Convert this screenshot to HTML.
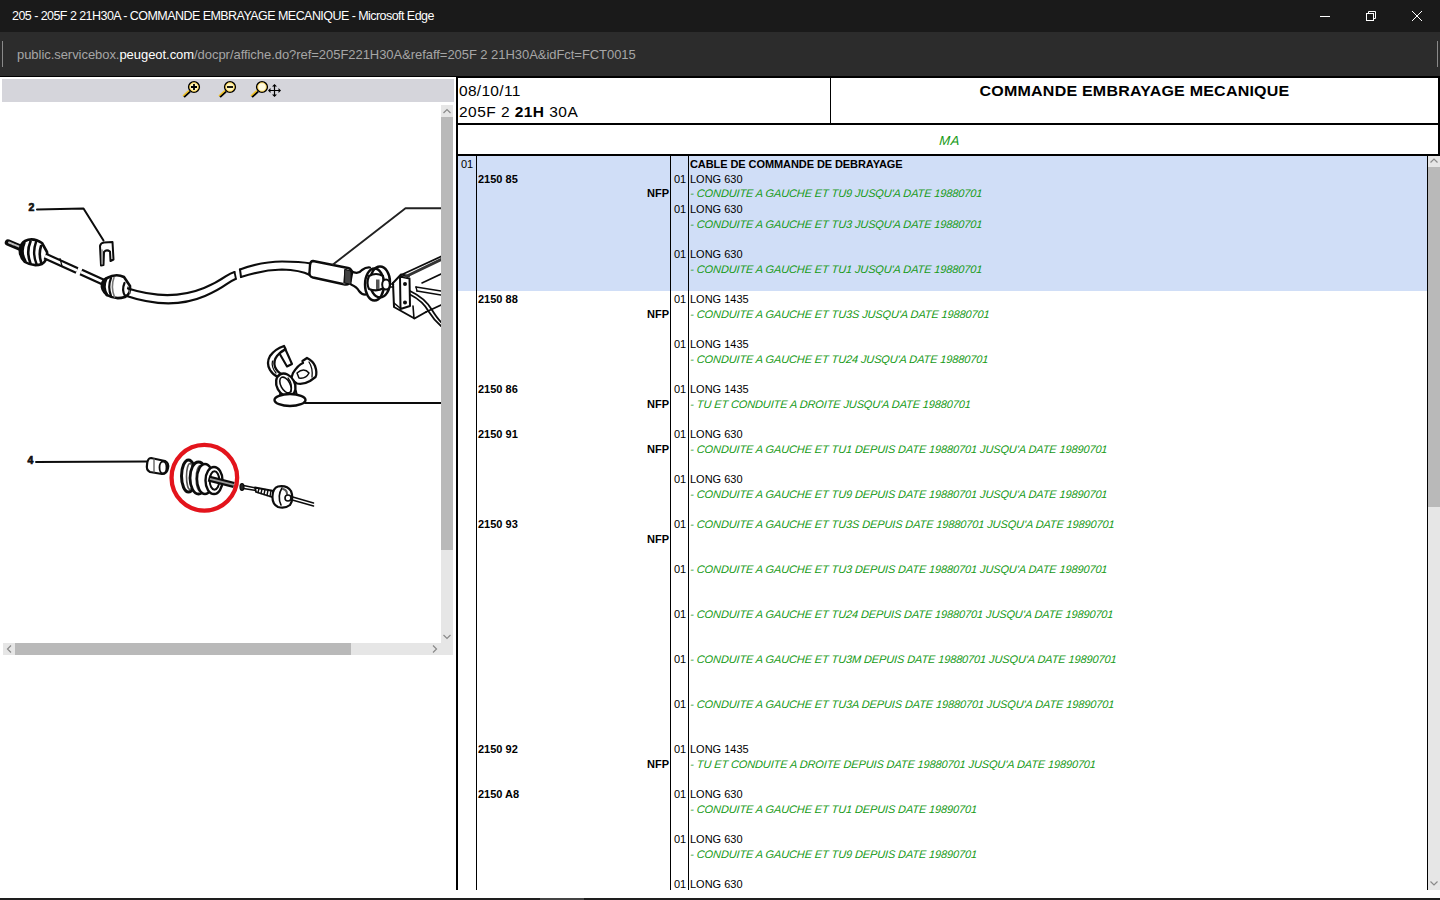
<!DOCTYPE html>
<html><head><meta charset="utf-8"><title>COMMANDE EMBRAYAGE MECANIQUE</title>
<style>
html,body{margin:0;padding:0}
body{width:1440px;height:900px;overflow:hidden;position:relative;background:#fff;font-family:"Liberation Sans",sans-serif;-webkit-font-smoothing:antialiased}
.a{position:absolute}
#title{left:0;top:0;width:1440px;height:32px;background:#1a1a1a}
#ttext{left:12px;top:9px;font-size:12.5px;letter-spacing:-0.55px;color:#fff;white-space:nowrap;line-height:14px}
#addr{left:0;top:32px;width:1440px;height:44px;background:#2c2c2c}
#url{left:17px;top:47px;font-size:13px;letter-spacing:-0.05px;color:#a6a6a6;white-space:nowrap;line-height:16px}
#url span{color:#fff}
#blk{left:0;top:76px;width:1440px;height:1px;background:#000}
#tb{left:2px;top:79px;width:452px;height:23px;background:#d5d5db}
.sbt{background:#e6e6e6}
.sth{background:#b9b9b9}
.t{position:absolute;font-size:11px;line-height:15px;height:15px;margin-top:1px;white-space:nowrap;color:#000}
.b{font-weight:bold}
.g{font-style:italic;color:#169a16;letter-spacing:-0.12px;transform:skewX(-4deg);transform-origin:0 12px}
.c4.b{letter-spacing:-0.08px}
.c1{left:461px}
.c2{left:478px}
.nfp{left:600px;width:69px;text-align:right}
.c3{left:674px}
.c4{left:690px}
.vl{position:absolute;background:#000}
</style></head><body>
<div id="title" class="a"></div>
<div id="ttext" class="a">205 - 205F 2 21H30A - COMMANDE EMBRAYAGE MECANIQUE - Microsoft Edge</div>
<div id="addr" class="a"></div>
<div class="a" style="left:2px;top:41px;width:1px;height:26px;background:#8a8a8a"></div>
<div class="a" style="left:1437px;top:41px;width:1px;height:26px;background:#8a8a8a"></div>
<div id="url" class="a">public.servicebox.<span>peugeot.com</span>/docpr/affiche.do?ref=205F221H30A&amp;refaff=205F 2 21H30A&amp;idFct=FCT0015</div>
<div id="blk" class="a"></div>
<div class="a" style="left:456px;top:77px;width:984px;height:1px;background:#000"></div>
<!-- window controls -->
<svg class="a" style="left:1300px;top:0" width="140" height="32">
 <line x1="1320" y1="16.5" x2="1330" y2="16.5" transform="translate(-1300,0)" stroke="#fff" stroke-width="1"/>
 <g transform="translate(-1300,0)" stroke="#fff" fill="none" stroke-width="1">
  <rect x="1366.5" y="13.5" width="7" height="7"/>
  <path d="M1368.5 13.5V11.5H1375.5V18.5H1373.5"/>
  <path d="M1412 11L1422 21M1422 11L1412 21"/>
 </g>
</svg>
<!-- left panel -->
<div id="tb" class="a"></div>
<svg class="a" style="left:176px;top:77px" width="112" height="26" viewBox="0 0 112 26">
 <g id="mag">
  <line x1="8" y1="20" x2="14" y2="14.5" stroke="#000" stroke-width="2.2"/>
  <line x1="7" y1="19" x2="13" y2="13.5" stroke="#f0c020" stroke-width="1.6"/>
 </g>
 <circle cx="18" cy="10" r="5.3" fill="#fff6c0" stroke="#000" stroke-width="1.6"/>
 <circle cx="18" cy="10" r="4.3" fill="none" stroke="#f0c030" stroke-width="0.8"/>
 <path d="M15 10H21M18 7V13" stroke="#000" stroke-width="1.8"/>
 <use href="#mag" x="36"/>
 <circle cx="54" cy="10" r="5.3" fill="#fff6c0" stroke="#000" stroke-width="1.6"/>
 <circle cx="54" cy="10" r="4.3" fill="none" stroke="#f0c030" stroke-width="0.8"/>
 <path d="M51 10H57" stroke="#000" stroke-width="1.8"/>
 <use href="#mag" x="68"/>
 <circle cx="86" cy="10" r="5.3" fill="#fffbe0" stroke="#000" stroke-width="1.6"/>
 <circle cx="86" cy="10" r="4.3" fill="none" stroke="#f0c030" stroke-width="0.8"/>
 <path d="M98.5 8V19M93 13.5H104" stroke="#000" stroke-width="1.2"/>
 <path d="M98.5 7L96 9.5H101ZM98.5 20L96 17.5H101ZM92 13.5L94.5 11V16ZM105 13.5L102.5 11V16Z" fill="#000"/>
</svg>
<div class="a" style="left:2px;top:103px;width:439px;height:540px;overflow:hidden"><svg width="439" height="540" viewBox="2 103 439 540">
<g fill="none" stroke="#0c0c0c" stroke-width="2" stroke-linecap="round" stroke-linejoin="round">
 <!-- label 2 & leader -->
 <path d="M37 209.5L83.5 208.5L103.5 240.5" stroke-width="2"/>
 <!-- clip 2 -->
 <path d="M100 246Q100.5 243 104 242.5L112.5 242L113.5 259.5L110.5 261L110 251.5Q106.5 249 104 252L103.5 265L101 265.5Z" fill="#fff" stroke-width="2"/>
 <path d="M102 250L102 264" stroke-width="1.5" stroke="#888"/>
 <!-- threaded rod -->
 <path d="M8 242.5L21 248" stroke-width="6.5" stroke-linecap="round"/>
 <path d="M9 242.5L20 247" stroke-width="2" stroke="#bbb" stroke-dasharray="2 1.2"/>
 <!-- grommet 1 -->
 <path d="M25 241Q33 237 42 243L47 252Q48 260 42 264Q33 267 25 262Q19 256 20 249Q21 243 25 241Z" fill="#fff" stroke-width="2.6"/>
 <path d="M24 243Q20 252 25 261" stroke-width="3.2"/>
 <path d="M30.5 241.5Q26 252 30.5 263.5" stroke-width="2.6"/>
 <path d="M36 242Q32 253 36.5 264" stroke-width="2.4"/>
 <path d="M41 246Q38.5 254 41 262" stroke-width="2.6"/>
 <!-- wire left -->
 <path d="M45 256L77 270.5" stroke-width="7" stroke-linecap="butt"/>
 <path d="M45 256L77 270.5" stroke-width="2.6" stroke="#fff" stroke-linecap="butt"/>
 <path d="M81 272L103 282" stroke-width="7" stroke-linecap="butt"/>
 <path d="M81 272L103 282" stroke-width="2.6" stroke="#fff" stroke-linecap="butt"/>
 <path d="M60 258.5L62 266" stroke-width="1.2"/>
 <!-- grommet 2 -->
 <path d="M107 278Q116 273 124 277L130 286Q131 294 125 297Q115 300 107 295Q101 290 102 284Q103 280 107 278Z" fill="#fff" stroke-width="2.6"/>
 <path d="M106 279Q102 287 107 295" stroke-width="3"/>
 <path d="M111 278Q107.5 287 111 296" stroke-width="2.2"/>
 <path d="M114 277.5Q110.5 287 114.5 297" stroke-width="1.6" stroke="#777"/>
 <path d="M124.5 283Q121.5 290 125 296" stroke-width="2.2"/>
 <path d="M128 287L130 293" stroke-width="1.6" stroke="#666"/>
 <!-- sheath 1 -->
 <path d="M128 288.5C158 298 182 297 204 288S226 274 234.5 272" stroke-width="2.2"/>
 <path d="M125 295.5C156 306 184 305 205 296S226 283 235.5 279" stroke-width="2.2"/>
 <path d="M234.5 272L236 279" stroke-width="1.8"/>
 <!-- sheath 2 -->
 <path d="M240 269.5Q262 261.5 282 261.5Q300 261.5 311 263.5" stroke-width="2.2"/>
 <path d="M241 277Q262 270 282 269.5Q300 270 310 275" stroke-width="2.2"/>
 <path d="M240 269.5L241 277" stroke-width="2"/>
 <!-- sleeve -->
 <path d="M313 261L348 268Q352 269 352 273L350.5 281Q349.5 285 345 284.5L313 277.5Q309 276.5 309.5 272.5L310 265Q310.5 261 313 261Z" fill="#fff" stroke-width="2.4"/>
 <path d="M346 270.5L344.5 283" stroke-width="3" stroke="#555"/>
 <!-- leader 1 -->
 <path d="M333 264.5L405.5 208.3L441 208.3" stroke-width="1.9" stroke="#222"/>
 <!-- neck + cup -->
 <path d="M345 269.5L351 271L351 284.5L345 283Z" fill="#444" stroke-width="1"/>
 <path d="M351 271Q358 275 362 270Q366 267 370 267.5M351 284.5Q357 287 359 291Q362 295 366 294.5" stroke-width="2.2"/>
 <ellipse cx="380" cy="282" rx="10" ry="15.5" fill="#fff" stroke-width="2.4"/>
 <ellipse cx="374.5" cy="284.5" rx="9.5" ry="16" fill="none" stroke-width="2.4"/>
 <path d="M369 276Q376 272 383 276L384 288Q377 292 369 289Q366 283 369 276Z" fill="#fff" stroke-width="2.2"/>
 <path d="M376 279.5h3.5v9.5h-3.5Z" fill="#555" stroke="none"/>
 <ellipse cx="386" cy="284.5" rx="3.8" ry="5" fill="#fff" stroke-width="2"/>
 <path d="M389.5 283.5L393.5 284.5M389.5 287L393.5 287" stroke-width="1.4"/>
 <!-- bracket -->
 <path d="M393 283L401 274.5L409 276" stroke-width="2"/>
 <path d="M393 283L394 307L414.5 318.5L426 312" stroke-width="2"/>
 <path d="M394 303L400 308" stroke-width="1.6"/>
 <path d="M400 276.5L409.5 278.5L410 306L400.5 309Z" fill="#fff" stroke-width="2"/>
 <circle cx="405" cy="284" r="1" fill="#111"/>
 <circle cx="405" cy="302.5" r="1" fill="#111"/>
 <path d="M401 275L441 256.5" stroke-width="1.8"/><path d="M406 276.5L441 259.5" stroke-width="3" stroke="#333"/>
 <path d="M422 283L441 274" stroke-width="1.6"/>
 <path d="M416 287L441 291M417 291L441 295" stroke-width="1.6"/>
 <path d="M416 287L417 291" stroke-width="1.4"/>
 <path d="M410 291Q425 298 432 310Q437 318 441 322M410 294.5Q423 301 429 312Q434 320 441 326" stroke-width="1.8"/>
 <path d="M414 318.5L413 306M426 312L441 305" stroke-width="1.6"/>
 <!-- clip 3 -->
 <path d="M293 373Q298 365 303 363L302.5 361L307 358Q313 361 315 366Q317.5 373 315.5 377L310 381Q303 385 297 383.5Q293 381.5 291 379Z" fill="#fff" stroke-width="2.3"/>
 <path d="M297 373Q304 367 309 373Q306 379 299 378Z" fill="#fff" stroke-width="1.5"/>
 <path d="M309 362Q313 368 312 377" stroke-width="1.3"/>
 <path d="M284 346Q275 349 270 356Q266 363 270 370Q273 375 278 377L283 375Q277 372 275 367Q273 361 277 356Q281 351 285.5 349Z" fill="#fff" stroke-width="2.3"/>
 <path d="M272.5 361Q271 367 276 373" stroke-width="1.2"/>
 <path d="M279.5 353.5L285.5 349.5L292 364L287 366.5Z" fill="#fff" stroke-width="2.1"/>
 <ellipse cx="285.8" cy="385" rx="9" ry="12" transform="rotate(-28 285.8 385)" stroke-width="2.4" fill="#fff"/>
 <ellipse cx="285.5" cy="385" rx="4.6" ry="8.6" transform="rotate(-28 285.5 385)" stroke-width="1.6"/>
 <path d="M288 378Q293 384 291 392" stroke-width="1.2"/>
 <path d="M280 394L280 397M296 391L297 396" stroke-width="1.8"/>
 <ellipse cx="290" cy="400" rx="15.5" ry="6" fill="#fff" stroke-width="2.4"/>
 <path d="M305 403L441 403" stroke-width="2"/>
 <!-- label 4 leader -->
 <path d="M36 462L147 461.5" stroke-width="1.9"/>
 <!-- small cylinder -->
 <path d="M151 458L165 461Q169 463 168 468Q167 474 162 474L150 472Q146 470 147 465Q147.5 458 151 458Z" fill="#fff" stroke-width="2.2"/>
 <ellipse cx="163" cy="467.5" rx="3.5" ry="6" stroke-width="1.8"/>
 <path d="M154 459v13" stroke-width="1.4" stroke="#666"/>
 <!-- grommet 3 -->
 <ellipse cx="188.5" cy="476" rx="7" ry="16" fill="#fff" stroke-width="3"/>
 <ellipse cx="190" cy="476.5" rx="3.5" ry="13" stroke-width="1.6" stroke="#555"/>
 <ellipse cx="198.5" cy="478" rx="8.5" ry="16" fill="#fff" stroke-width="2.8"/>
 <ellipse cx="200.5" cy="478.5" rx="4.5" ry="13" stroke-width="1.4" stroke="#555"/>
 <ellipse cx="205" cy="479" rx="8" ry="15" fill="#fff" stroke-width="2.4"/>
 <ellipse cx="214" cy="480.5" rx="8.5" ry="13.5" fill="#fff" stroke-width="2.4"/>
 <ellipse cx="214.5" cy="480.5" rx="4.8" ry="9.2" stroke-width="2"/>
 <path d="M208.5 478.5L234 485" stroke-width="6" stroke-linecap="butt"/>
 <path d="M210 478.8L234 484.8" stroke-width="1.8" stroke="#999" stroke-linecap="butt"/>
 <!-- thin wire + spring -->
 <ellipse cx="242" cy="487" rx="2" ry="3.5" fill="#222" stroke-width="1.2"/>
 <path d="M243.5 485.5L256 488M243.5 488.5L256 490.5" stroke-width="1.3"/>
 <path d="M255 487.5L273.5 491L273.5 497.5L256 492Z" fill="#fff" stroke-width="1.8"/>
 <path d="M259 488.5l-1 4M262 489l-1 4.5M265 489.5l-1 5M268 490l-1 5.5M271 490.5l-1 6" stroke-width="1.4"/>
 <!-- nut -->
 <path d="M278 486.5Q287 485 291 491Q294 499 290 505Q285 509 278 507Q272 504 272.5 496Q273 488 278 486.5Z" fill="#fff" stroke-width="2.2"/>
 <path d="M282 488Q277 496 281 505" stroke-width="1.6"/>
 <path d="M283 489Q287 490 287 494" stroke-width="2" stroke="#555"/>
 <circle cx="288" cy="498" r="3" fill="#fff" stroke-width="1.6"/>
 <path d="M291 496.5L313.5 503M290.5 499.5L313.5 506" stroke-width="1.5"/>
</g>
<!-- numbers -->
<text x="28.5" y="210.5" font-family="Liberation Sans" font-weight="bold" font-size="10.5" fill="#111" stroke="#111" stroke-width="0.7">2</text>
<text x="27.5" y="463.5" font-family="Liberation Sans" font-weight="bold" font-size="10.5" fill="#111" stroke="#111" stroke-width="0.7">4</text>
<!-- red circle -->
<circle cx="204.35" cy="477.75" r="32.8" fill="none" stroke="#e3141c" stroke-width="4.3"/>
</svg>
</div>
<!-- left v scrollbar -->
<div class="a sbt" style="left:441px;top:105px;width:12px;height:538px"></div>
<div class="a sth" style="left:441px;top:117px;width:12px;height:433px"></div>
<!-- left h scrollbar -->
<div class="a sbt" style="left:3px;top:643px;width:450px;height:12px"></div>
<div class="a sth" style="left:15px;top:643px;width:336px;height:12px"></div>
<svg class="a" style="left:0;top:100px" width="460" height="560">
 <g fill="none" stroke="#8a8a8a" stroke-width="1.2">
  <path d="M443.5 13L447 9.5L450.5 13"/>
  <path d="M443.5 535L447 538.5L450.5 535"/>
  <path d="M11 545.5L7.5 549L11 552.5"/>
  <path d="M433 545.5L436.5 549L433 552.5"/>
 </g>
</svg>
<!-- right panel -->
<div class="vl" style="left:456px;top:77px;width:2px;height:813px"></div>
<div class="vl" style="left:1438px;top:77px;width:2px;height:79px"></div>
<div class="vl" style="left:830px;top:77px;width:1px;height:46px"></div>
<div class="vl" style="left:456px;top:123px;width:984px;height:2px"></div>
<div class="vl" style="left:456px;top:154px;width:984px;height:2px"></div>
<div class="a" style="left:459px;top:81px;font-size:15.5px;letter-spacing:0.3px;line-height:20px;white-space:nowrap">08/10/11</div>
<div class="a" style="left:459px;top:102px;font-size:15.5px;letter-spacing:0.45px;line-height:20px;white-space:nowrap">205F 2 <b>21H</b> 30A</div>
<div class="a" style="left:831px;top:81px;width:607px;text-align:center;font-size:16px;line-height:20px;font-weight:bold;letter-spacing:0.22px;transform:scaleY(0.97);transform-origin:50% 15.3px;white-space:nowrap">COMMANDE EMBRAYAGE MECANIQUE</div>
<div class="a" style="left:939px;top:133px;font-size:13px;letter-spacing:0.5px;line-height:16px;font-style:italic;transform:skewX(-4deg);transform-origin:0 13px;color:#169a16;white-space:nowrap">MA</div>
<!-- table -->
<div class="a" style="left:458px;top:156px;width:969px;height:135px;background:#d0def7"></div>
<div class="vl" style="left:476px;top:156px;width:1px;height:734px"></div>
<div class="vl" style="left:670px;top:156px;width:1px;height:734px"></div>
<div class="vl" style="left:688px;top:156px;width:1px;height:734px"></div>
<div class="vl" style="left:1427px;top:156px;width:1px;height:734px"></div>
<div class="a" style="left:0;top:0;width:1440px;height:900px;overflow:hidden">
<div class="a" style="left:0;top:0;width:1440px;height:890px;overflow:hidden">
<div class="t c1" style="top:156px">01</div>
<div class="t c4 b" style="top:156px">CABLE DE COMMANDE DE DEBRAYAGE</div>
<div class="t c2 b" style="top:171px">2150 85</div>
<div class="t c3" style="top:171px">01</div>
<div class="t c4" style="top:171px">LONG 630</div>
<div class="t nfp b" style="top:186px;margin-top:0">NFP</div>
<div class="t c4 g" style="top:186px;margin-top:0">- CONDUITE A GAUCHE ET TU9 JUSQU&#39;A DATE 19880701</div>
<div class="t c3" style="top:201px">01</div>
<div class="t c4" style="top:201px">LONG 630</div>
<div class="t c4 g" style="top:216px">- CONDUITE A GAUCHE ET TU3 JUSQU&#39;A DATE 19880701</div>
<div class="t c3" style="top:246px">01</div>
<div class="t c4" style="top:246px">LONG 630</div>
<div class="t c4 g" style="top:261px">- CONDUITE A GAUCHE ET TU1 JUSQU&#39;A DATE 19880701</div>
<div class="t c2 b" style="top:291px">2150 88</div>
<div class="t c3" style="top:291px">01</div>
<div class="t c4" style="top:291px">LONG 1435</div>
<div class="t nfp b" style="top:306px">NFP</div>
<div class="t c4 g" style="top:306px">- CONDUITE A GAUCHE ET TU3S JUSQU&#39;A DATE 19880701</div>
<div class="t c3" style="top:336px">01</div>
<div class="t c4" style="top:336px">LONG 1435</div>
<div class="t c4 g" style="top:351px">- CONDUITE A GAUCHE ET TU24 JUSQU&#39;A DATE 19880701</div>
<div class="t c2 b" style="top:381px">2150 86</div>
<div class="t c3" style="top:381px">01</div>
<div class="t c4" style="top:381px">LONG 1435</div>
<div class="t nfp b" style="top:396px">NFP</div>
<div class="t c4 g" style="top:396px">- TU ET CONDUITE A DROITE JUSQU&#39;A DATE 19880701</div>
<div class="t c2 b" style="top:426px">2150 91</div>
<div class="t c3" style="top:426px">01</div>
<div class="t c4" style="top:426px">LONG 630</div>
<div class="t nfp b" style="top:441px">NFP</div>
<div class="t c4 g" style="top:441px">- CONDUITE A GAUCHE ET TU1 DEPUIS DATE 19880701 JUSQU&#39;A DATE 19890701</div>
<div class="t c3" style="top:471px">01</div>
<div class="t c4" style="top:471px">LONG 630</div>
<div class="t c4 g" style="top:486px">- CONDUITE A GAUCHE ET TU9 DEPUIS DATE 19880701 JUSQU&#39;A DATE 19890701</div>
<div class="t c2 b" style="top:516px">2150 93</div>
<div class="t c3" style="top:516px">01</div>
<div class="t c4 g" style="top:516px">- CONDUITE A GAUCHE ET TU3S DEPUIS DATE 19880701 JUSQU&#39;A DATE 19890701</div>
<div class="t nfp b" style="top:531px">NFP</div>
<div class="t c3" style="top:561px">01</div>
<div class="t c4 g" style="top:561px">- CONDUITE A GAUCHE ET TU3 DEPUIS DATE 19880701 JUSQU&#39;A DATE 19890701</div>
<div class="t c3" style="top:606px">01</div>
<div class="t c4 g" style="top:606px">- CONDUITE A GAUCHE ET TU24 DEPUIS DATE 19880701 JUSQU&#39;A DATE 19890701</div>
<div class="t c3" style="top:651px">01</div>
<div class="t c4 g" style="top:651px">- CONDUITE A GAUCHE ET TU3M DEPUIS DATE 19880701 JUSQU&#39;A DATE 19890701</div>
<div class="t c3" style="top:696px">01</div>
<div class="t c4 g" style="top:696px">- CONDUITE A GAUCHE ET TU3A DEPUIS DATE 19880701 JUSQU&#39;A DATE 19890701</div>
<div class="t c2 b" style="top:741px">2150 92</div>
<div class="t c3" style="top:741px">01</div>
<div class="t c4" style="top:741px">LONG 1435</div>
<div class="t nfp b" style="top:756px">NFP</div>
<div class="t c4 g" style="top:756px">- TU ET CONDUITE A DROITE DEPUIS DATE 19880701 JUSQU&#39;A DATE 19890701</div>
<div class="t c2 b" style="top:786px">2150 A8</div>
<div class="t c3" style="top:786px">01</div>
<div class="t c4" style="top:786px">LONG 630</div>
<div class="t c4 g" style="top:801px">- CONDUITE A GAUCHE ET TU1 DEPUIS DATE 19890701</div>
<div class="t c3" style="top:831px">01</div>
<div class="t c4" style="top:831px">LONG 630</div>
<div class="t c4 g" style="top:846px">- CONDUITE A GAUCHE ET TU9 DEPUIS DATE 19890701</div>
<div class="t c3" style="top:876px">01</div>
<div class="t c4" style="top:876px">LONG 630</div>
</div></div>
<!-- right scrollbar -->
<div class="a sbt" style="left:1428px;top:156px;width:12px;height:734px"></div>
<div class="a sth" style="left:1428px;top:167px;width:12px;height:340px"></div>
<svg class="a" style="left:1420px;top:150px" width="20" height="740">
 <g fill="none" stroke="#8a8a8a" stroke-width="1.2">
  <path d="M10.5 12.5L14 9L17.5 12.5"/>
  <path d="M10.5 731.5L14 735L17.5 731.5"/>
 </g>
</svg>
<!-- bottom bar -->
<div class="a" style="left:0;top:898px;width:1440px;height:2px;background:#1e1e1e"></div>
<div class="a" style="left:540px;top:898px;width:44px;height:2px;background:#444"></div>
</body></html>
